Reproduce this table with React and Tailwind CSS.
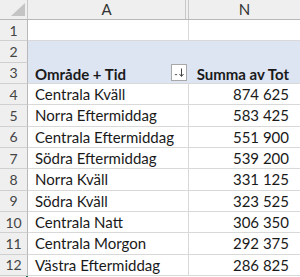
import React from 'react';

const rows = [
    { label: 'Centrala Kväll', value: '874 625' },
    { label: 'Norra Eftermiddag', value: '583 425' },
    { label: 'Centrala Eftermiddag', value: '551 900' },
    { label: 'Södra Eftermiddag', value: '539 200' },
    { label: 'Norra Kväll', value: '331 125' },
    { label: 'Södra Kväll', value: '323 525' },
    { label: 'Centrala Natt', value: '306 350' },
    { label: 'Centrala Morgon', value: '292 375' },
    { label: 'Västra Eftermiddag', value: '286 825' },
];

const font = { fontFamily: 'Lato, "Liberation Sans", sans-serif' };

const RowHead = ({ n }) => (
    <div className="w-[28px] shrink-0 h-full flex items-center justify-center bg-[#efefef] border-r border-b border-r-[#b8b8b8] border-b-[#d0d0d0] text-[14px] text-[#444]">
        {n}
    </div>
);

const SortButton = () => (
    <div className="w-[16px] h-[17px] mr-[1px] bg-white border border-[#a8a8a8] flex items-center justify-center">
        <svg width="12" height="11" viewBox="0 0 12 11">
            <path d="M1.5 7 L4.5 7 L3 8.6 Z" fill="#555" />
            <path d="M8.5 1.5 V9" stroke="#444" strokeWidth="1" />
            <path d="M6.5 7 L8.5 9.5 L10.5 7" stroke="#444" strokeWidth="1" fill="none" />
        </svg>
    </div>
);

export default function App() {
    return (
        <div className="w-[300px] h-[277px] overflow-hidden bg-white flex flex-col" style={font}>
            {/* column headers */}
            <div className="h-[20px] shrink-0 flex bg-[#efefef] border-b border-[#b8b8b8] text-[15px] text-[#333]">
                <div className="w-[28px] shrink-0 border-r border-[#c8c8c8] relative">
                    <svg className="absolute left-0 top-0" width="28" height="19" viewBox="0 0 28 19">
                        <path d="M11 16 L25 16 L25 3 Z" fill="#c4c4c4" />
                    </svg>
                </div>
                <div className="w-[158px] shrink-0 border-r border-[#c8c8c8] flex items-center justify-center">A</div>
                <div className="w-[3px] shrink-0 border-r border-[#c8c8c8]"></div>
                <div className="flex-1 flex items-center justify-center">N</div>
            </div>

            {/* row 1 */}
            <div className="h-[21.33px] shrink-0 flex">
                <RowHead n={1} />
                <div className="w-[161px] shrink-0 border-r border-b border-[#d9d9d9]"></div>
                <div className="flex-1 border-b border-[#d9d9d9]"></div>
            </div>

            {/* rows 2-3: pivot header */}
            <div className="h-[21.33px] shrink-0 flex">
                <RowHead n={2} />
                <div className="flex-1 bg-[#dde5f3]"></div>
            </div>
            <div className="h-[21.33px] shrink-0 flex">
                <RowHead n={3} />
                <div className="w-[161px] shrink-0 bg-[#dde5f3] border-b border-[#d9d9d9] flex items-center justify-between pl-[7px] pr-[1px]">
                    <span className="font-bold text-[15px] text-[#1a1a1a] mt-[2px]">Område + Tid</span>
                    <SortButton />
                </div>
                <div className="flex-1 bg-[#dde5f3] border-b border-[#d9d9d9] flex items-center justify-end pr-[11px]">
                    <span className="font-bold text-[15px] text-[#1a1a1a] mt-[2px]">Summa av Tot</span>
                </div>
            </div>

            {/* data rows */}
            {rows.map((r, i) => (
                <div key={r.label} className="h-[21.33px] shrink-0 flex">
                    <RowHead n={i + 4} />
                    <div className="w-[161px] shrink-0 border-r border-b border-[#d9d9d9] flex items-center pl-[7px] text-[15px] text-[#1a1a1a] whitespace-nowrap">
                        {r.label}
                    </div>
                    <div className="flex-1 border-b border-[#d9d9d9] flex items-center justify-end pr-[11px] text-[15px] text-[#1a1a1a]">
                        {r.value}
                    </div>
                </div>
            ))}

            {/* row 13 edge */}
            <div className="h-[2px] shrink-0 flex">
                <div className="w-[26px] shrink-0 bg-[#efefef]"></div>
                <div className="w-[2px] shrink-0 bg-[#217346]"></div>
            </div>
        </div>
    );
}
